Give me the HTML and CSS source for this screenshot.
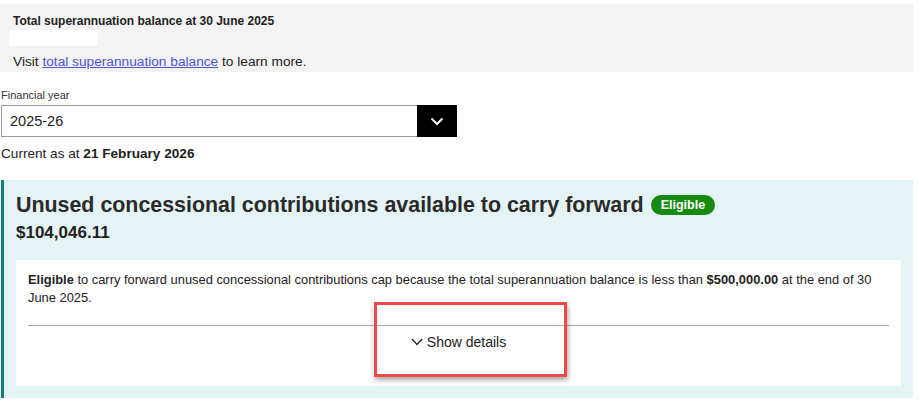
FILE: index.html
```html
<!DOCTYPE html>
<html lang="en">
<head>
<meta charset="utf-8">
<title>Super</title>
<link rel="stylesheet" href="styles.css">
</head>
<body>
<div class="page">
  <section class="tsb">
    <div class="tsb-title">Total superannuation balance at 30 June 2025</div>
    <div class="tsb-value"></div>
    <p class="tsb-visit">Visit <a href="#">total superannuation balance</a> to learn more.</p>
  </section>

  <div class="field">
    <label class="field-label">Financial year</label>
    <div class="select">
      <span class="select-value">2025-26</span>
      <span class="select-btn">
        <svg width="14" height="9" viewBox="0 0 14 9"><path d="M1.5 1.5 L7 7 L12.5 1.5" fill="none" stroke="#fff" stroke-width="2"/></svg>
      </span>
    </div>
  </div>
  <p class="current">Current as at <strong>21 February 2026</strong></p>

  <section class="panel">
    <h2 class="panel-title">Unused concessional contributions available to carry forward <span class="badge">Eligible</span></h2>
    <div class="panel-amount">$104,046.11</div>
    <div class="card">
      <p class="card-text"><strong>Eligible</strong> to carry forward unused concessional contributions cap because the total superannuation balance is less than <strong>$500,000.00</strong> at the end of 30 June 2025.</p>
      <hr class="card-rule">
      <div class="details">
        <svg width="12" height="8" viewBox="0 0 12 8"><path d="M0.8 1 L6 6.5 L11.2 1" fill="none" stroke="#222" stroke-width="1.3"/></svg>
        <span>Show details</span>
      </div>
    </div>
  </section>
  <div class="highlight"></div>
</div>
</body>
</html>
```

FILE: styles.css
```css
* { box-sizing: border-box; }
html, body { margin: 0; padding: 0; background: #fff; }
body {
  font-family: "Liberation Sans", Arial, sans-serif;
  color: #222;
}
.page {
  width: 913px;
  position: relative;
  padding-top: 4px;
}
.tsb {
  background: #f3f3f3;
  padding: 10px 13px 4px 13px;
  height: 68px;
}
.tsb-title {
  font-size: 12px;
  font-weight: bold;
  line-height: 14px;
}
.tsb-value {
  margin: 2px 0 0 -4px;
  width: 89px;
  height: 16px;
  background: #fff;
}
.tsb-visit {
  margin: 8px 0 0;
  font-size: 13.7px;
  line-height: 16px;
}
.tsb-visit a { color: #4c55d4; }

.field { margin-top: 16px; padding-left: 1px; }
.field-label {
  display: block;
  font-size: 11px;
  line-height: 14px;
  color: #333;
  margin-bottom: 3px;
}
.select {
  width: 456px;
  height: 32px;
  border: 1px solid #999;
  display: flex;
  align-items: center;
  justify-content: space-between;
  background: #fff;
}
.select-value {
  font-size: 14.5px;
  padding-left: 8px;
  color: #222;
}
.select-btn {
  width: 40px;
  height: 32px;
  margin-right: -1px;
  background: #000;
  display: flex;
  align-items: center;
  justify-content: center;
}
.current {
  margin: 9px 0 0 1px;
  font-size: 13.6px;
  line-height: 16px;
}

.panel {
  margin-top: 18px;
  background: #e4f3f4;
  border-left: 3px solid #0e7f7c;
  margin-left: 1px;
  padding: 12px 12px 12px 12px;
}
.panel-title {
  margin: 0;
  font-size: 21.4px;
  line-height: 26px;
  font-weight: bold;
  color: #2a2a2a;
  display: flex;
  align-items: center;
  gap: 7px;
}
.badge {
  display: inline-block;
  background: #178a10;
  color: #fff;
  font-size: 12.5px;
  line-height: 20px;
  padding: 0 10px;
  border-radius: 10px;
}
.panel-amount {
  font-size: 17px;
  font-weight: bold;
  line-height: 22px;
  margin-top: 4px;
}
.card {
  margin-top: 16px;
  background: #fff;
  padding: 11px 12px 0 12px;
  height: 126px;
}
.card-text {
  margin: 0;
  font-size: 12.9px;
  line-height: 18px;
}
.card-rule {
  margin: 18px 0 0;
  border: 0;
  border-top: 1px solid #aaa;
}
.details {
  display: flex;
  align-items: center;
  justify-content: center;
  gap: 4px;
  margin-top: 8px;
  font-size: 14px;
  line-height: 16px;
}
.highlight {
  position: absolute;
  left: 374px;
  top: 302px;
  width: 193px;
  height: 75px;
  border: 3px solid #f04848;
  box-shadow: 1px 3px 5px rgba(0,0,0,0.35);
}
```
